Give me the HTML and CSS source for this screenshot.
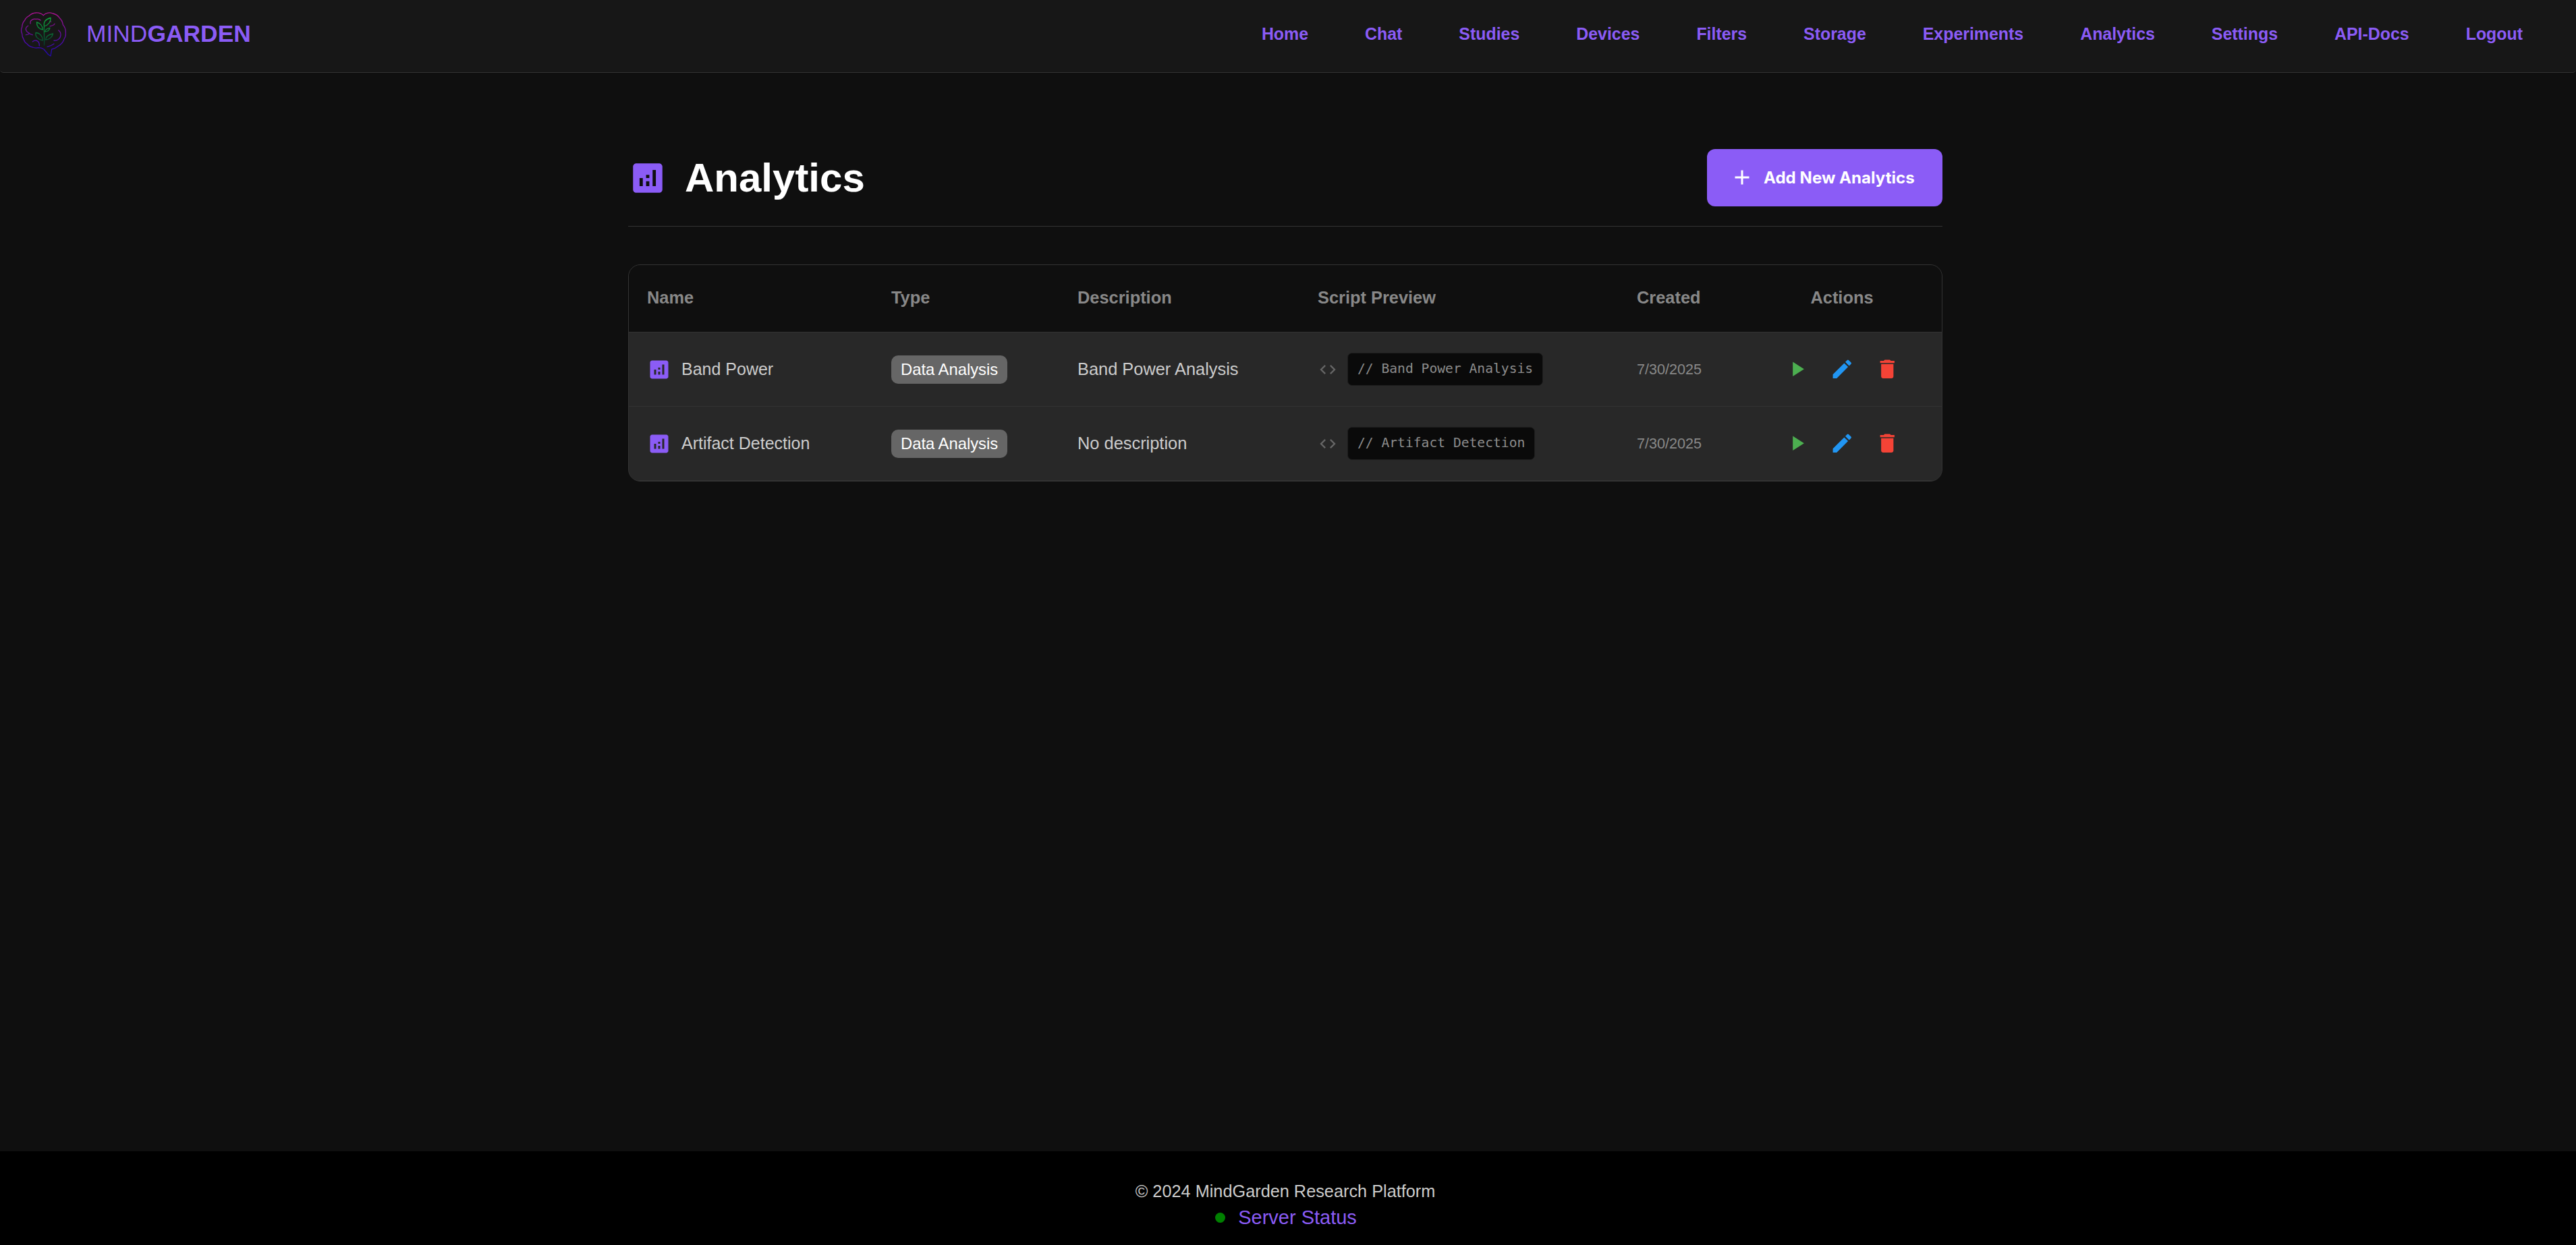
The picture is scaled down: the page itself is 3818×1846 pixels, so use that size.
FILE: index.html
```html
<!DOCTYPE html>
<html lang="en">
<head>
<meta charset="utf-8">
<title>Analytics - MindGarden</title>
<link rel="stylesheet" href="styles.css">
</head>
<body>
<svg class="sprites" width="0" height="0" aria-hidden="true">
  <defs>
    <symbol id="i-analytics" viewBox="0 0 24 24"><path d="M19 3H5c-1.1 0-2 .9-2 2v14c0 1.1.9 2 2 2h14c1.1 0 2-.9 2-2V5c0-1.1-.9-2-2-2zM9 17H7v-5h2v5zm4 0h-2v-3h2v3zm0-5h-2v-2h2v2zm4 5h-2V7h2v10z"/></symbol>
    <symbol id="i-code" viewBox="0 0 24 24"><path d="M9.4 16.6 4.8 12l4.6-4.6L8 6l-6 6 6 6 1.4-1.4zm5.2 0 4.6-4.6-4.6-4.6L16 6l6 6-6 6-1.4-1.4z"/></symbol>
    <symbol id="i-play" viewBox="0 0 24 24"><path d="M8 5v14l11-7z"/></symbol>
    <symbol id="i-edit" viewBox="0 0 24 24"><path d="M3 17.25V21h3.75L17.81 9.94l-3.75-3.75L3 17.25zM20.71 7.04a.996.996 0 0 0 0-1.41l-2.34-2.34a.996.996 0 0 0-1.41 0l-1.83 1.83 3.75 3.75 1.83-1.83z"/></symbol>
    <symbol id="i-delete" viewBox="0 0 24 24"><path d="M6 19c0 1.1.9 2 2 2h8c1.1 0 2-.9 2-2V7H6v12zM19 4h-3.5l-1-1h-5l-1 1H5v2h14V4z"/></symbol>
    <symbol id="i-add" viewBox="0 0 24 24"><path d="M19 13h-6v6h-2v-6H5v-2h6V5h2v6h6v2z"/></symbol>
  </defs>
</svg>
<div class="page">
<nav class="nav">
  <a class="brand" href="#">
    <svg class="brand-logo" viewBox="0 0 68 66" aria-hidden="true">
      <defs>
        <linearGradient id="g-brain" gradientUnits="userSpaceOnUse" x1="0" y1="2" x2="0" y2="62"><stop offset="0" stop-color="#a8128f"/><stop offset="1" stop-color="#2408b0"/></linearGradient>
        <linearGradient id="g-leaf" gradientUnits="userSpaceOnUse" x1="0" y1="9" x2="0" y2="50"><stop offset="0" stop-color="#0fa83c"/><stop offset="1" stop-color="#07382c"/></linearGradient>
      </defs>
      <g class="brain">
        <path d="M34.3 4.7C31 1.5 27 .8 23.3 1 19 1.2 15.5 3 13.3 5.3 10 7 7.8 9 6.7 12 4 15 2.7 18.5 2.7 22 1.3 25 1.3 29 2.7 32 2.7 35 3.5 38 5 40 5.8 43 7.5 45.5 10 47 12.5 50 15 51.5 18.3 52 21 53.2 24 53.3 26.7 52.7 29.5 52.7 32.5 53.5 35 55L41.7 63 45 65 46.7 55C50 54.5 53.5 52.8 56.7 50 60.5 48 63.5 44.5 65 40 67 37 67.8 33.5 67.3 30 67.6 26 66 22 63.3 18.7 62.8 14.5 61 11 58.3 8.7 56 5 52 2.8 48.3 2 45.5.8 42.5.6 40 1.3 37.8 1.8 36 3 34.3 4.7Z"/>
        <path d="M15 17C14.6 13.5 16 12 16.7 12 18.5 10 21 9.8 23.3 10.3 26 9.8 28.5 10.5 30 12M11.7 20.3C9.5 21.5 8.2 23.3 8.3 25.3 8.5 27.8 10 29.3 11.7 30.3 13.5 32 16 33.2 18.3 33.7M8.3 33.7C10 33.7 11.8 33 13.3 32M18.3 43.7C19.8 42.4 21.5 41.8 23.3 42 26.5 42.6 28.5 45.5 28.3 50M56.7 27C59 28.7 60.2 31 60 33.7 59.8 36.8 58.6 39 56.7 40.3 54.8 41.8 52.5 42.4 50 42M40 51.3C43.5 50.8 47 49.3 50 47M44 20.8C47 20.5 49.8 19.4 51 17.3M45 14.3h.6"/>
      </g>
      <g class="leaf">
        <path d="M35.5 49C36 38 35 28 35.5 20M35.5 21C34 13 39 10 45 8.5 45.5 14 42 19 35.5 21ZM33.5 26C27 25 24 20 24.5 15 29 16 33 20 33.5 26ZM36.5 29C37.5 25.5 40 24 44 23.5 43 27 40.5 29 36.5 29ZM33.5 42C26 41 22 36 23 30.5 28 30.5 33 35 33.5 42ZM37.5 41C38 36 43 33 48.5 32 47.5 37 43 41 37.5 41Z"/>
      </g>
    </svg>
    <span class="brand-name">MIND<strong>GARDEN</strong></span>
  </a>
  <ul class="nav-links">
    <li><a href="#">Home</a></li>
    <li><a href="#">Chat</a></li>
    <li><a href="#">Studies</a></li>
    <li><a href="#">Devices</a></li>
    <li><a href="#">Filters</a></li>
    <li><a href="#">Storage</a></li>
    <li><a href="#">Experiments</a></li>
    <li><a href="#">Analytics</a></li>
    <li><a href="#">Settings</a></li>
    <li><a href="#">API-Docs</a></li>
    <li><a href="#">Logout</a></li>
  </ul>
</nav>
<main class="main">
  <div class="content">
    <header class="page-head">
      <div class="page-title">
        <svg class="title-icon"><use href="#i-analytics"/></svg>
        <h1>Analytics</h1>
      </div>
      <button class="add-btn" type="button"><svg class="add-icon"><use href="#i-add"/></svg>Add New Analytics</button>
    </header>
    <div class="card">
      <table class="table">
        <colgroup>
          <col class="c-name"><col class="c-type"><col class="c-desc"><col class="c-script"><col class="c-created"><col class="c-actions">
        </colgroup>
        <thead>
          <tr><th>Name</th><th>Type</th><th>Description</th><th>Script Preview</th><th>Created</th><th class="center">Actions</th></tr>
        </thead>
        <tbody>
          <tr>
            <td><div class="name-cell"><svg class="row-icon"><use href="#i-analytics"/></svg><span>Band Power</span></div></td>
            <td><span class="badge">Data Analysis</span></td>
            <td class="desc">Band Power Analysis</td>
            <td><div class="script-cell"><svg class="code-icon"><use href="#i-code"/></svg><code class="code">// Band Power Analysis</code></div></td>
            <td class="date">7/30/2025</td>
            <td><div class="actions"><svg class="act play"><use href="#i-play"/></svg><svg class="act edit"><use href="#i-edit"/></svg><svg class="act del"><use href="#i-delete"/></svg></div></td>
          </tr>
          <tr>
            <td><div class="name-cell"><svg class="row-icon"><use href="#i-analytics"/></svg><span>Artifact Detection</span></div></td>
            <td><span class="badge">Data Analysis</span></td>
            <td class="desc">No description</td>
            <td><div class="script-cell"><svg class="code-icon"><use href="#i-code"/></svg><code class="code">// Artifact Detection</code></div></td>
            <td class="date">7/30/2025</td>
            <td><div class="actions"><svg class="act play"><use href="#i-play"/></svg><svg class="act edit"><use href="#i-edit"/></svg><svg class="act del"><use href="#i-delete"/></svg></div></td>
          </tr>
        </tbody>
      </table>
    </div>
  </div>
</main>
<footer class="footer">
  <p class="copy">© 2024 MindGarden Research Platform</p>
  <p class="status"><span class="dot"></span><a href="#">Server Status</a></p>
</footer>
</div>
</body>
</html>
```
FILE: styles.css
```css
* { box-sizing: border-box; }
html, body { margin: 0; height: 100%; }
body { background: #0f0f0f; color: #ccc; font-family: "Liberation Sans", Arial, sans-serif; font-size: 24.32px; }
a { color: inherit; text-decoration: none; }
.sprites { position: absolute; width: 0; height: 0; }
.page { height: 1846px; display: flex; flex-direction: column; }

.nav { flex: none; height: 108px; display: flex; align-items: center; justify-content: space-between; background: #171717; border-bottom: 1px solid #333; border-radius: 0 0 5px 5px; padding: 0 79px 5.5px 30px; color: #8b5cf6; }
.brand { display: flex; align-items: center; gap: 30px; }
.brand-logo { width: 68px; height: 66px; display: block; }
.brain { fill: none; stroke: url(#g-brain); stroke-width: 1.3; stroke-linecap: round; stroke-linejoin: round; }
.leaf { fill: none; stroke: url(#g-leaf); stroke-width: 1.3; stroke-linecap: round; stroke-linejoin: round; }
.brand-name { font-size: 35.4px; line-height: 1; }
.brand-name strong { font-weight: 700; }
.nav-links { list-style: none; display: flex; gap: 84px; margin: 0; padding: 0; font-weight: 700; font-size: 24.9px; }

.main { flex: 1; padding-right: 8px; }
.content { width: 1948px; margin: 0 auto; padding-top: 113px; }
.page-head { display: flex; align-items: center; justify-content: space-between; height: 115px; border-bottom: 1px solid #333; padding-bottom: 29px; margin-bottom: 56px; }
.page-title { display: flex; align-items: center; gap: 26px; }
.title-icon { width: 58px; height: 58px; fill: #8b5cf6; display: block; }
h1 { margin: 0; font-size: 60px; font-weight: 700; color: #fff; line-height: 1.2; }
.add-btn { height: 85px; width: 349px; display: flex; align-items: center; gap: 14px; padding: 0 0 1px 34px; border: 0; border-radius: 12px; background: #8b5cf6; color: #fff; font-family: Inter, sans-serif; font-weight: 700; font-size: 24.1px; }
.add-icon { width: 36px; height: 36px; fill: #fff; display: block; }

.card { border: 1px solid #333; border-radius: 18px; overflow: hidden; background: #282828; }
.table { width: 100%; border-collapse: separate; border-spacing: 0; table-layout: fixed; }
.c-name { width: 362px; } .c-type { width: 276px; } .c-desc { width: 356px; } .c-script { width: 473px; } .c-created { width: 183px; } .c-actions { width: 296px; }
th { height: 100px; padding: 0 27px 2px; background: #0f0f0f; color: #888; font-weight: 700; font-size: 25.4px; text-align: left; border-bottom: 1px solid #333; }
th.center { text-align: center; }
td { height: 110px; padding: 0 27px; border-bottom: 1px solid #333; font-size: 25px; color: #ccc; vertical-align: middle; }
.desc { font-size: 25.4px; }
.name-cell { display: flex; align-items: center; gap: 15px; color: #ccc; }
.row-icon { width: 36px; height: 36px; fill: #8b5cf6; display: block; flex: none; }
.badge { display: inline-flex; align-items: center; height: 42px; padding: 0 14px; background: #666; color: #fff; border-radius: 10px; font-size: 23.8px; white-space: nowrap; }
.script-cell { display: flex; align-items: center; gap: 15px; padding-left: 1px; }
.code-icon { width: 28px; height: 28px; fill: #666; display: block; flex: none; }
.code { display: inline-block; padding: 12.5px 14px; background: #0a0a0a; border: 1px solid #1e1e1e; border-radius: 7px; color: #8c8c8c; font-family: "DejaVu Sans Mono", monospace; font-size: 19.65px; line-height: 1.15; white-space: nowrap; }
.date { font-size: 21.6px; color: #888; }
.actions { display: flex; justify-content: center; gap: 30.5px; }
.act { width: 36.5px; height: 36.5px; display: block; }
.play { fill: #4caf50; } .edit { fill: #2196f3; } .del { fill: #f44336; }

.footer { flex: none; height: 139px; background: #000; padding: 41px 8px 0 0; text-align: center; }
.copy { margin: 0; font-size: 25.3px; line-height: 37px; color: #ccc; }
.status { margin: 0; display: flex; align-items: center; justify-content: center; gap: 19px; padding-left: 2px; font-size: 29px; line-height: 40px; color: #8b5cf6; }
.dot { width: 15px; height: 15px; border-radius: 50%; background: #008000; }
```
